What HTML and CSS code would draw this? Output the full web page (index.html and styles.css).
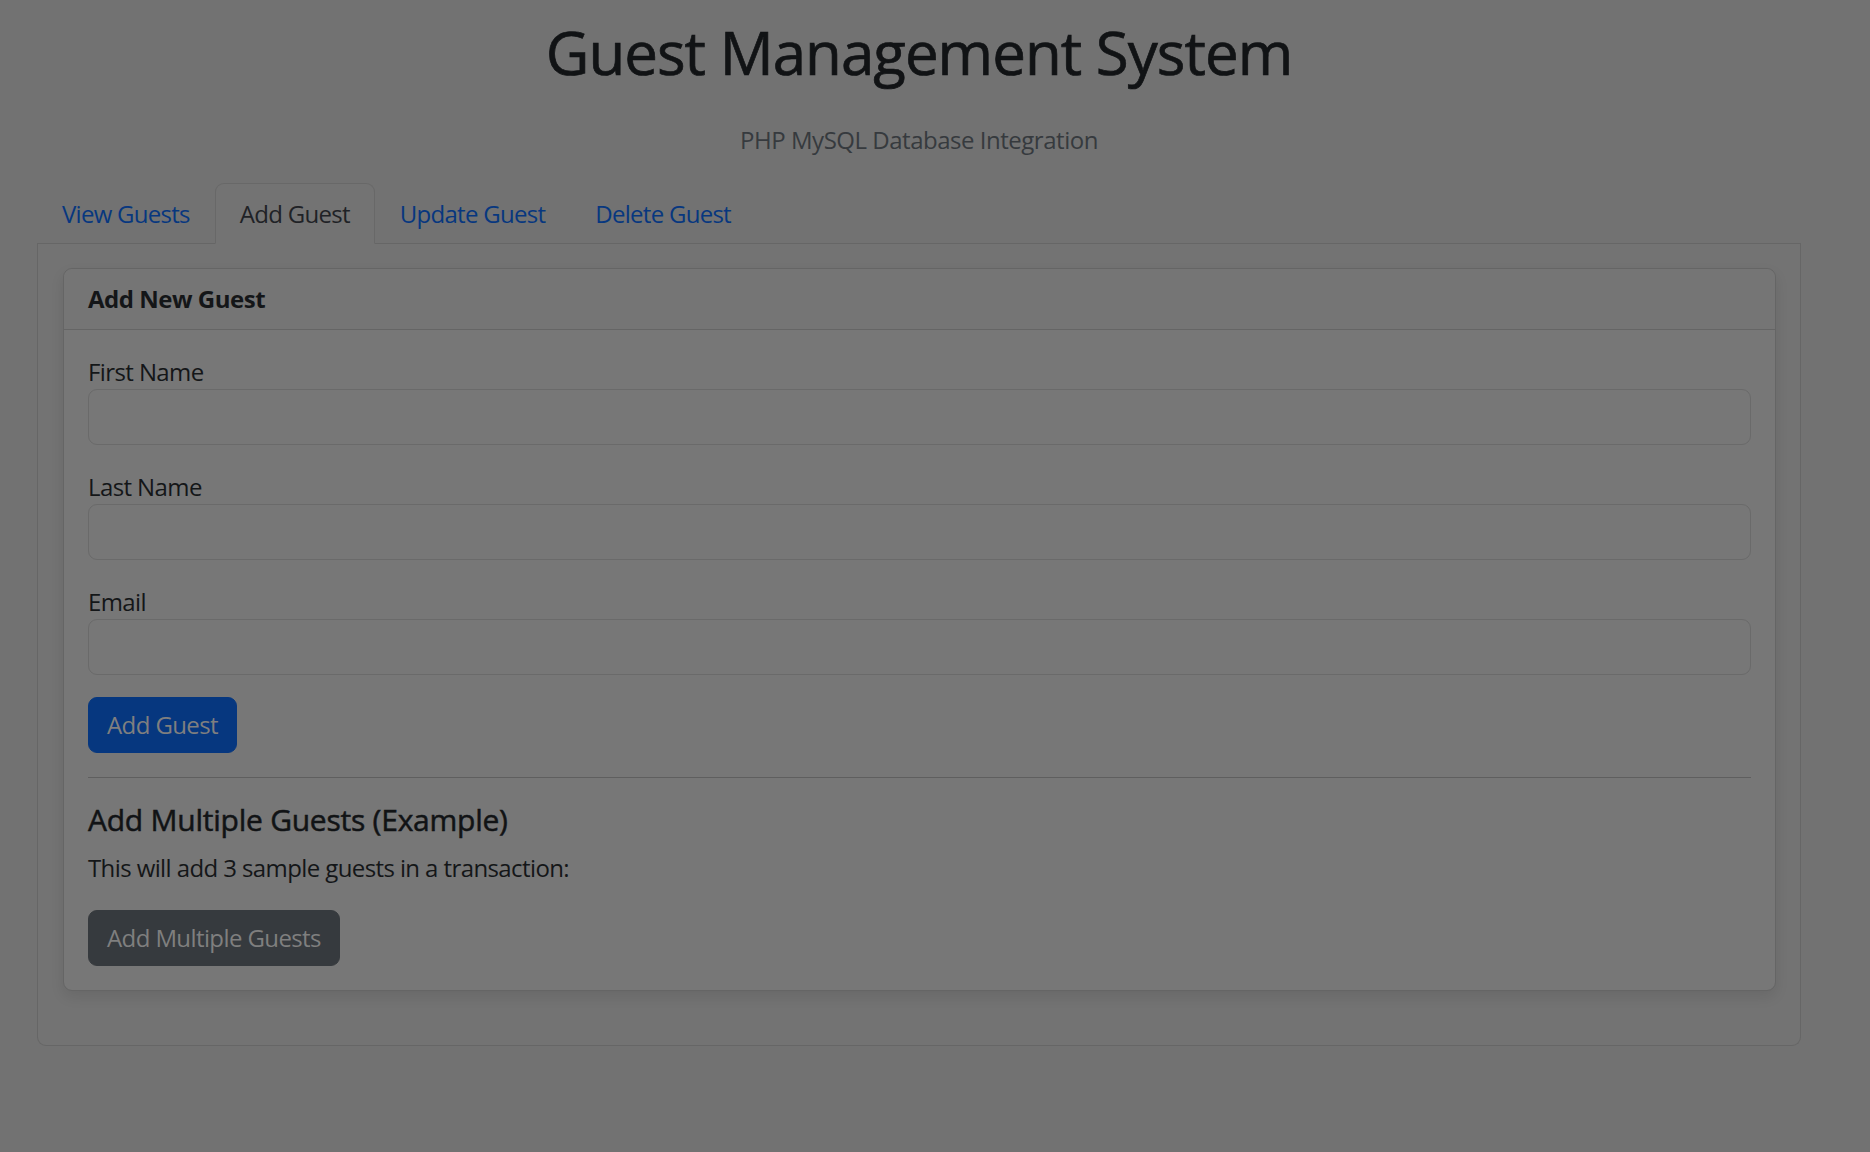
FILE: index.html
```html
<!DOCTYPE html>
<html lang="en">
<head>
<meta charset="utf-8">
<title>Guest Management System</title>
<link rel="stylesheet" href="styles.css">
</head>
<body>
<div class="page">
  <h1 class="title">Guest Management System</h1>
  <p class="subtitle">PHP MySQL Database Integration</p>
  <nav class="tabs">
    <a class="tab" href="#">View Guests</a>
    <a class="tab active" href="#">Add Guest</a>
    <a class="tab" href="#">Update Guest</a>
    <a class="tab" href="#">Delete Guest</a>
  </nav>
  <div class="pane">
    <div class="card">
      <div class="card-header">Add New Guest</div>
      <div class="card-body">
        <form class="form">
          <div class="field">
            <label class="label">First Name</label>
            <input class="input" type="text">
          </div>
          <div class="field">
            <label class="label">Last Name</label>
            <input class="input" type="text">
          </div>
          <div class="field">
            <label class="label">Email</label>
            <input class="input" type="email">
          </div>
          <button class="btn btn-primary" type="button">Add Guest</button>
        </form>
        <hr class="divider">
        <h5 class="section-title">Add Multiple Guests (Example)</h5>
        <p class="section-text">This will add 3 sample guests in a transaction:</p>
        <button class="btn btn-secondary" type="button">Add Multiple Guests</button>
      </div>
    </div>
  </div>
</div>
</body>
</html>
```

FILE: styles.css
```css
* { box-sizing: border-box; }

html, body {
  margin: 0;
  padding: 0;
}

body {
  background: #727272;
  font-family: "Open Sans", "Noto Sans", "Liberation Sans", sans-serif;
  font-size: 24px;
  line-height: 36px;
  color: #111315;
  letter-spacing: -0.025em;
  min-height: 1152px;
}

.page {
  width: 1764px;
  margin-left: 37px;
  padding-top: 16px;
}

.title {
  margin: 0 0 34px;
  font-size: 60px;
  line-height: 72px;
  font-weight: 500;
  letter-spacing: -0.016em;
  -webkit-text-stroke: 0.7px #111315;
  text-align: center;
  color: #111315;
}

.subtitle {
  margin: 0 0 25px;
  text-align: center;
  color: #363a3e;
  letter-spacing: -0.02em;
}

.tabs {
  display: flex;
  border-bottom: 1px solid #666666;
}

.tab {
  display: block;
  padding: 12px 24px;
  line-height: 35px;
  margin-bottom: -1px;
  border: 1px solid transparent;
  border-radius: 9px 9px 0 0;
  color: #07377f;
  text-decoration: none;
  letter-spacing: -0.03em;
}

.tab.active {
  color: #1f2226;
  background: #737373;
  border-color: #686868 #686868 #737373;
}

.pane {
  background: #737373;
  border: 1px solid #666666;
  border-top: 0;
  border-radius: 0 0 9px 9px;
  padding: 24px 24px 24px 25px;
}

.card {
  background: #777777;
  border: 1px solid #656565;
  border-radius: 9px;
  margin-bottom: 30px;
  box-shadow: 0 6px 14px rgba(0, 0, 0, 0.09);
}

.card-header {
  padding: 12px 24px;
  font-weight: 700;
  letter-spacing: -0.02em;
  background: #757575;
  border-bottom: 1px solid #656565;
  border-radius: 9px 9px 0 0;
  color: #141618;
}

.card-body {
  padding: 24px;
}

.form {
  display: flex;
  flex-direction: column;
  align-items: flex-start;
}

.field {
  align-self: stretch;
  margin-bottom: 24px;
}

.field:last-of-type {
  margin-bottom: 22px;
}

.label {
  display: block;
  line-height: 35px;
  color: #141618;
}

.input {
  display: block;
  width: 100%;
  height: 56px;
  padding: 9px 18px;
  font: inherit;
  background: #777777;
  border: 1px solid #6a6a6a;
  border-radius: 9px;
  outline: none;
}

.btn {
  display: inline-block;
  padding: 9px 18px;
  font: inherit;
  letter-spacing: inherit;
  line-height: 36px;
  border: 1px solid transparent;
  border-radius: 9px;
  color: #7f7f7f;
  cursor: pointer;
}

.btn-primary {
  background: #06377f;
  border-color: #06377f;
}

.btn-secondary {
  background: #363a3e;
  border-color: #363a3e;
}

.divider {
  margin: 24px 0;
  border: 0;
  border-top: 1px solid #5f5f5f;
}

.section-title {
  margin: 0 0 12px;
  font-size: 30px;
  line-height: 36px;
  font-weight: 500;
  letter-spacing: -0.008em;
  -webkit-text-stroke: 0.5px #111315;
  color: #111315;
}

.section-text {
  margin: 0 0 24px;
  color: #141618;
}
```
